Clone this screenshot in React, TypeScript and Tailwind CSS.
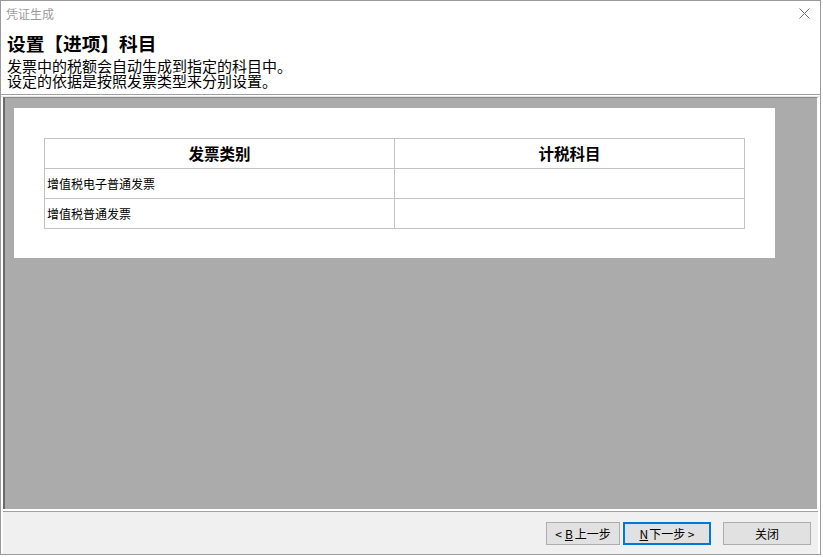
import React from "react";

const font = { fontFamily: '"Noto Sans CJK SC", "Noto Sans", sans-serif' };

export default function App() {
  return (
    <div className="w-[823px] h-[557px] bg-white" style={font}>
      <div className="w-[821px] h-[555px] border border-[#9a9a9a] bg-white flex flex-col">
        {/* title bar */}
        <div className="h-[25px] flex items-center justify-between pl-[5px] pr-[8px]">
          <span className="text-[12px] leading-none text-[#9b9b9b]">凭证生成</span>
          <svg width="11" height="11" viewBox="0 0 11 11" className="mr-[2px]">
            <path d="M0.5 0.5 L10.5 10.5 M10.5 0.5 L0.5 10.5" stroke="#6d6d6d" strokeWidth="1" />
          </svg>
        </div>
        {/* header */}
        <div className="h-[68px] pl-[6px] pt-[6px]">
          <div className="text-[18.7px] leading-[22px] font-bold text-black">设置【进项】科目</div>
          <div className="mt-[4px] text-[15px] leading-[15px] text-black">
            <div>发票中的税额会自动生成到指定的科目中。</div>
            <div>设定的依据是按照发票类型来分别设置。</div>
          </div>
        </div>
        {/* separator */}
        <div className="h-[3px] border-t border-[#a0a0a0] border-b border-b-[#e8e8e8] bg-white" />
        {/* content area */}
        <div className="flex-1 px-[2px] flex">
          <div className="flex-1 bg-[#ababab] border-l-2 border-t border-l-[#6a6a6a] border-t-[#8a8a8a] border-r border-r-white pt-[10px] pl-[9px]">
            <div className="w-[761px] h-[150px] bg-white pt-[30px] pl-[30px]">
              <table className="border-collapse w-[701px] text-black">
                <thead>
                  <tr className="h-[30px]">
                    <th className="border border-[#c3c3c3] w-[350px] text-[15.5px] font-bold p-0">发票类别</th>
                    <th className="border border-[#c3c3c3] text-[15.5px] font-bold p-0">计税科目</th>
                  </tr>
                </thead>
                <tbody>
                  <tr className="h-[30px]">
                    <td className="border border-[#c3c3c3] text-[12px] pl-[2px] p-0">增值税电子普通发票</td>
                    <td className="border border-[#c3c3c3] p-0"></td>
                  </tr>
                  <tr className="h-[30px]">
                    <td className="border border-[#c3c3c3] text-[12px] pl-[2px] p-0">增值税普通发票</td>
                    <td className="border border-[#c3c3c3] p-0"></td>
                  </tr>
                </tbody>
              </table>
            </div>
          </div>
        </div>
        {/* bottom separator */}
        <div className="h-[3px] border-t border-white border-b border-b-[#a0a0a0] bg-white mx-[2px]" />
        {/* button bar */}
        <div className="h-[42px] bg-[#f0f0f0] flex items-start justify-end pt-[10px] pr-[7px] mx-[2px]">
          <button className="w-[74px] h-[23px] bg-[#e1e1e1] border border-[#adadad] text-[12px] text-black flex items-center justify-center leading-none">
            &lt; <span className="underline ml-[3px]">B</span>
            <span className="ml-[2px]">上一步</span>
          </button>
          <button className="ml-[3px] w-[88px] h-[23px] bg-[#e1e1e1] border-2 border-[#0078d7] text-[12px] text-black flex items-center justify-center leading-none">
            <span className="underline">N</span>
            <span className="ml-[1px]">下一步 &gt;</span>
          </button>
          <button className="ml-[12px] w-[88px] h-[23px] bg-[#e1e1e1] border border-[#adadad] text-[12px] text-black flex items-center justify-center leading-none">
            关闭
          </button>
        </div>
      </div>
    </div>
  );
}
